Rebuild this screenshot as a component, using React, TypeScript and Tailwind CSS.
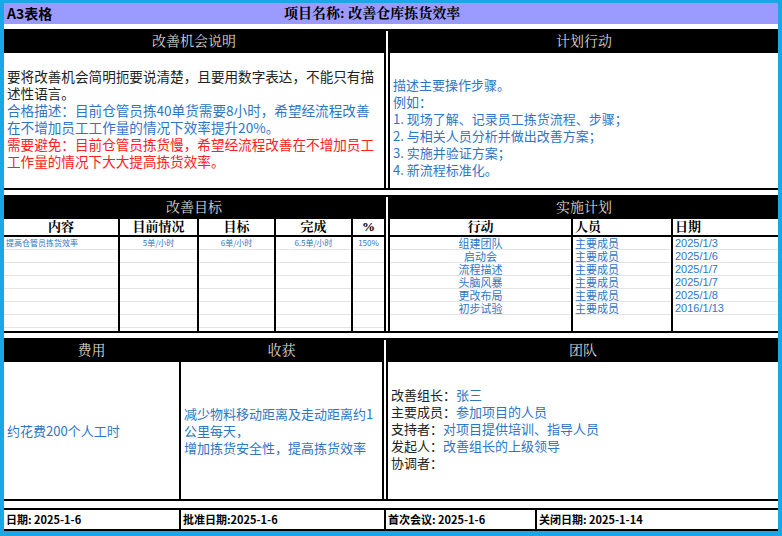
const F = { fontFamily: '"Noto Sans CJK SC", "Liberation Sans", sans-serif' };
const S = { fontFamily: '"Liberation Serif", "Noto Serif CJK SC", "Noto Sans CJK SC", serif' };

function Head({ children }: { children: React.ReactNode }) {
  return (
    <div className="h-[22px] bg-black text-[#d8d8d8] text-[14px] flex items-center justify-center leading-none" style={S}>
      {children}
    </div>
  );
}

const plan = [
  ["组建团队", "2025/1/3"],
  ["启动会", "2025/1/6"],
  ["流程描述", "2025/1/7"],
  ["头脑风暴", "2025/1/7"],
  ["更改布局", "2025/1/8"],
  ["初步试验", "2016/1/13"],
];

const goal = ["提高仓管员拣货效率", "5单/小时", "6单/小时", "6.5单/小时", "150%"];

export default function App() {
  const blue = "text-[#2e75c6]";
  return (
    <div className="w-[782px] h-[536px] bg-[#1aa7e8] pt-[3px] px-[4px] pb-[5px]" style={F}>
      <div className="bg-white h-full flex flex-col">
        <div className="h-[21px] bg-[#9b9bff] flex items-center px-[3px] text-[14px] font-bold relative">
          <span>A3表格</span>
          <span className="absolute left-[280px]" style={S}>项目名称: 改善仓库拣货效率</span>
        </div>
        <div className="h-[5px]" />
        {/* section 1 */}
        <div className="flex h-[161px] border-y-2 border-black">
          <div className="w-[382px] flex flex-col border-r-2 border-black">
            <Head>改善机会说明</Head>
            <div className="px-[3px] pt-[15px] text-[13.6px] leading-[17px]">
              <div className="text-[#222]">要将改善机会简明扼要说清楚，且要用数字表达，不能只有描述性语言。</div>
              <div className={blue}>合格描述：目前仓管员拣40单货需要8小时，希望经流程改善在不增加员工工作量的情况下效率提升20%。</div>
              <div className="text-[#ff2020]">需要避免：目前仓管员拣货慢，希望经流程改善在不增加员工工作量的情况下大大提高拣货效率。</div>
            </div>
          </div>
          <div className="w-[2px]" />
          <div className="flex-1 flex flex-col border-l-2 border-black">
            <Head>计划行动</Head>
            <div className={`px-[3px] pt-[23px] text-[13px] leading-[17px] ${blue}`}>
              <div>描述主要操作步骤。</div>
              <div>例如：</div>
              <div>1. 现场了解、记录员工拣货流程、步骤；</div>
              <div>2. 与相关人员分析并做出改善方案；</div>
              <div>3. 实施并验证方案；</div>
              <div>4. 新流程标准化。</div>
            </div>
          </div>
        </div>
        <div className="h-[5px]" />
        {/* section 2 */}
        <div className="flex h-[138px] border-y-2 border-black">
          <div className="w-[382px] flex flex-col border-r-2 border-black">
            <Head>改善目标</Head>
            <div className="flex-1 flex flex-col">
              <div className="flex h-[18px] border-b-2 border-black text-[13px] font-bold" style={S}>
                {["内容", "目前情况", "目标", "完成", "%"].map((h, i) => (
                  <div key={h} className={`${["w-[116px]", "w-[79px]", "w-[77px]", "w-[77px]", "flex-1"][i]} flex items-center justify-center ${i < 4 ? "border-r-2 border-black" : ""}`}>{h}</div>
                ))}
              </div>
              <div className="flex flex-1">
                {goal.map((c, i) => (
                  <div key={i} className={`${["w-[116px]", "w-[79px]", "w-[77px]", "w-[77px]", "flex-1"][i]} ${i < 4 ? "border-r-2 border-black" : ""}`}>
                    {[0, 1, 2, 3, 4, 5, 6].map((k) => (
                      <div key={k} className={`h-[13px] border-b border-[#e4e4e4] ${blue} text-[8px] leading-[12px] ${i === 0 ? "pl-[2px]" : "text-center"}`}>{k === 0 ? c : ""}</div>
                    ))}
                  </div>
                ))}
              </div>
            </div>
          </div>
          <div className="w-[2px]" />
          <div className="flex-1 flex flex-col border-l-2 border-black">
            <Head>实施计划</Head>
            <div className="flex h-[18px] border-b-2 border-black text-[13px] font-bold" style={S}>
              <div className="w-[183px] border-r-2 border-black flex items-center justify-center">行动</div>
              <div className="w-[100px] border-r-2 border-black flex items-center pl-[2px]">人员</div>
              <div className="flex-1 flex items-center pl-[2px]">日期</div>
            </div>
            <div className="flex flex-1 text-[11px]">
              <div className={`w-[183px] border-r-2 border-black ${blue} text-center leading-[12px]`}>
                {plan.map((p) => <div key={p[0]} className="h-[13px] border-b border-[#e4e4e4]">{p[0]}</div>)}
              </div>
              <div className={`w-[100px] border-r-2 border-black ${blue} pl-[2px] leading-[12px]`}>
                {plan.map((p) => <div key={p[0]} className="h-[13px] border-b border-[#e4e4e4]">主要成员</div>)}
              </div>
              <div className={`flex-1 ${blue} pl-[2px] leading-[12px]`} style={{ fontFamily: '"Liberation Sans", sans-serif' }}>
                {plan.map((p) => <div key={p[0]} className="h-[13px] border-b border-[#e4e4e4]">{p[1]}</div>)}
              </div>
            </div>
          </div>
        </div>
        <div className="h-[5px]" />
        {/* section 3 */}
        <div className="flex h-[163px] border-y-2 border-black">
          <div className="w-[177px] flex flex-col border-r-2 border-black">
            <Head>费用</Head>
            <div className={`flex-1 flex items-center px-[3px] text-[13px] ${blue}`}>约花费200个人工时</div>
          </div>
          <div className="w-[203px] flex flex-col border-r-2 border-black">
            <Head>收获</Head>
            <div className={`flex-1 flex items-center px-[3px] text-[13px] leading-[17px] ${blue}`}>
              <div>减少物料移动距离及走动距离约1公里每天，<br />增加拣货安全性，提高拣货效率</div>
            </div>
          </div>
          <div className="w-[2px]" />
          <div className="flex-1 flex flex-col border-l-2 border-black">
            <Head>团队</Head>
            <div className="px-[3px] pt-[24px] text-[13px] leading-[17px] text-[#222]">
              <div>改善组长：<span className={blue}>张三</span></div>
              <div>主要成员：<span className={blue}>参加项目的人员</span></div>
              <div>支持者：<span className={blue}>对项目提供培训、指导人员</span></div>
              <div>发起人：<span className={blue}>改善组长的上级领导</span></div>
              <div>协调者：</div>
            </div>
          </div>
        </div>
        <div className="h-[7px]" />
        <div className="flex flex-1 border-y-2 border-black text-[11px] font-bold items-stretch">
          {[["日期: 2025-1-6", "w-[177px]"], ["批准日期:2025-1-6", "w-[205px]"], ["首次会议: 2025-1-6", "w-[151px]"], ["关闭日期: 2025-1-14", "flex-1"]].map(([t, w], i) => (
            <div key={t} className={`${w} flex items-center px-[2px] ${i < 3 ? "border-r-2 border-black" : ""}`}>{t}</div>
          ))}
        </div>
      </div>
    </div>
  );
}
